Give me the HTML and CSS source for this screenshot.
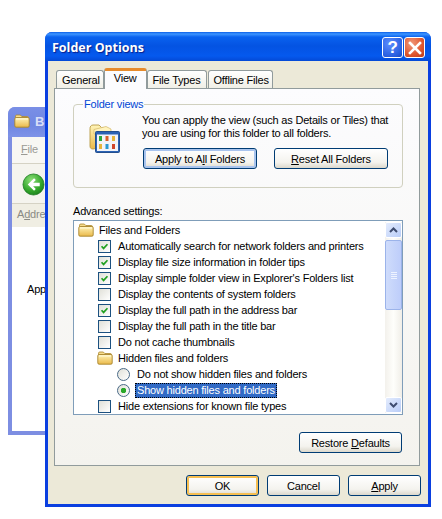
FILE: index.html
```html
<!DOCTYPE html>
<html lang="en">
<head>
<meta charset="utf-8">
<title>Folder Options</title>
<link rel="stylesheet" href="styles.css">
</head>
<body>
<svg class="defs" width="0" height="0" aria-hidden="true">
  <defs>
    <linearGradient id="fold" x1="0" y1="0" x2="0" y2="1">
      <stop offset="0" stop-color="#fff4b8"/>
      <stop offset="1" stop-color="#eab94a"/>
    </linearGradient>
    <symbol id="folder" viewBox="0 0 16 14">
      <path d="M1.5 3V2.2C1.5 1.5 2 1 2.7 1H6.3L7.8 2.5H13.3C14 2.5 14.5 3 14.5 3.7V4H1.5Z" fill="#f6dc8c" stroke="#a8842c" stroke-width=".8"/>
      <rect x=".8" y="3.5" width="14.4" height="9.7" rx="1.3" fill="url(#fold)" stroke="#a8842c" stroke-width=".9"/>
      <path d="M2 5h12" stroke="#fff9d8" stroke-width="1"/>
    </symbol>
    <symbol id="tick" viewBox="0 0 13 13">
      <path d="M3 6.2 5.4 8.8 10 3.8" fill="none" stroke="#21a121" stroke-width="2"/>
    </symbol>
  </defs>
</svg>

<main class="desktop">
  <section class="win win-back">
    <header class="back-title">
      <svg class="back-folder" viewBox="0 0 16 14"><use href="#folder"/></svg>
      <span class="back-name">Be</span>
    </header>
    <div class="back-menu"><span><u>F</u>ile</span></div>
    <div class="back-tools">
      <svg class="back-arrow" viewBox="0 0 24 24">
        <defs><radialGradient id="grn" cx=".4" cy=".3" r=".8"><stop offset="0" stop-color="#8fe07a"/><stop offset=".6" stop-color="#35a82c"/><stop offset="1" stop-color="#17781a"/></radialGradient></defs>
        <circle cx="12" cy="12" r="11" fill="url(#grn)" stroke="#1c7a20" stroke-width=".8"/>
        <path d="M18.5 10.2H11.6L14.4 7.3 12.6 5.6 6 12 12.6 18.4 14.4 16.7 11.6 13.8H18.5Z" fill="#fff"/>
      </svg>
    </div>
    <div class="back-addr">A<u>d</u>dre</div>
    <div class="back-body"><span>App</span></div>
  </section>

  <section class="win win-front">
    <header class="titlebar">
      <h1 class="title">Folder Options</h1>
      <div class="caps">
        <span class="cap cap-help">?</span>
        <span class="cap cap-close">
          <svg viewBox="0 0 14 14" width="14" height="14"><path d="M2 2 12 12M12 2 2 12" stroke="#fff" stroke-width="2.6" stroke-linecap="square"/></svg>
        </span>
      </div>
    </header>

    <div class="client">
      <nav class="tabs">
        <span class="tab tab-tight">General</span>
        <span class="tab tab-active">View</span>
        <span class="tab">File Types</span>
        <span class="tab tab-tight">Offline Files</span>
      </nav>

      <div class="panel">
        <fieldset class="group">
          <legend class="legend">Folder views</legend>
          <div class="views">
            <svg class="views-icon" viewBox="0 0 32 32">
              <path d="M2 6.500C2 4.500 3 3 5 3H11L13.500 5.500H19V24.500L5 27C3 27 2 26 2 24Z" fill="url(#fold)" stroke="#b89a44" stroke-width=".9"/>
              <path d="M6 7.500 18 4.500 23 7V12H6Z" fill="#fff3bd" stroke="#d3b868" stroke-width=".7"/>
              <rect x="7.500" y="9.500" width="24" height="21" rx="1" fill="#2b62b4" stroke="#234f8e"/>
              <rect x="9" y="12.500" width="21" height="16.500" fill="#f2f4f8"/>
              <rect x="11" y="14" width="3" height="5" fill="#2ca83a"/>
              <rect x="17.500" y="14" width="3" height="5" fill="#d8602a"/>
              <rect x="24" y="14" width="3" height="5" fill="#e6b53a"/>
              <rect x="11" y="22" width="3" height="5" fill="#e6b53a"/>
              <rect x="17.500" y="22" width="3" height="5" fill="#2a9ad0"/>
              <rect x="24" y="22" width="3" height="5" fill="#d0452a"/>
            </svg>
            <div class="views-main">
              <p class="views-text">You can apply the view (such as Details or Tiles) that<br>you are using for this folder to all folders.</p>
              <div class="views-btns">
                <button class="btn btn-focus btn-wide" type="button">Apply to A<u>l</u>l Folders</button>
                <button class="btn btn-wide" type="button"><u>R</u>eset All Folders</button>
              </div>
            </div>
          </div>
        </fieldset>

        <div class="adv-label">Advanced settings:</div>
        <div class="list">
          <ul class="rows">
            <li class="row lvl0"><svg class="ico-folder"><use href="#folder"/></svg><span>Files and Folders</span></li>
            <li class="row lvl1"><span class="check"><svg viewBox="0 0 13 13"><use href="#tick"/></svg></span><span>Automatically search for network folders and printers</span></li>
            <li class="row lvl1"><span class="check"><svg viewBox="0 0 13 13"><use href="#tick"/></svg></span><span>Display file size information in folder tips</span></li>
            <li class="row lvl1"><span class="check"><svg viewBox="0 0 13 13"><use href="#tick"/></svg></span><span>Display simple folder view in Explorer's Folders list</span></li>
            <li class="row lvl1"><span class="check"></span><span>Display the contents of system folders</span></li>
            <li class="row lvl1"><span class="check"><svg viewBox="0 0 13 13"><use href="#tick"/></svg></span><span>Display the full path in the address bar</span></li>
            <li class="row lvl1"><span class="check"></span><span>Display the full path in the title bar</span></li>
            <li class="row lvl1"><span class="check"></span><span>Do not cache thumbnails</span></li>
            <li class="row lvl1"><svg class="ico-folder"><use href="#folder"/></svg><span>Hidden files and folders</span></li>
            <li class="row lvl2"><span class="radio"></span><span>Do not show hidden files and folders</span></li>
            <li class="row lvl2"><span class="radio radio-on"></span><span class="selected">Show hidden files and folders</span></li>
            <li class="row lvl1"><span class="check"></span><span>Hide extensions for known file types</span></li>
          </ul>
          <div class="scroll">
            <span class="sb-btn"><svg viewBox="0 0 9 6" width="9" height="6"><path d="M1 5 4.500 1.500 8 5" fill="none" stroke="#3f4d70" stroke-width="2"/></svg></span>
            <span class="sb-thumb"><i></i><i></i><i></i><i></i></span>
            <span class="sb-track"></span>
            <span class="sb-btn"><svg viewBox="0 0 9 6" width="9" height="6"><path d="M1 1 4.500 4.500 8 1" fill="none" stroke="#3f4d70" stroke-width="2"/></svg></span>
          </div>
        </div>

        <div class="restore-row">
          <button class="btn btn-restore" type="button">Restore <u>D</u>efaults</button>
        </div>
      </div>

      <footer class="actions">
        <button class="btn btn-default btn-act" type="button">OK</button>
        <button class="btn btn-act" type="button">Cancel</button>
        <button class="btn btn-act" type="button"><u>A</u>pply</button>
      </footer>
    </div>
  </section>
</main>
</body>
</html>
```
FILE: styles.css
```css
* { box-sizing: border-box; }
html, body { margin: 0; padding: 0; background: #fff; }
body {
  font-family: "Liberation Sans", Arial, sans-serif;
  font-size: 11px;
  letter-spacing: -0.2px;
  color: #000;
  width: 442px;
  height: 519px;
  overflow: hidden;
}
.defs { position: absolute; }
.desktop { position: relative; width: 442px; height: 519px; }
.win { position: absolute; }

/* background explorer window */
.win-back {
  left: 8px; top: 107px; width: 80px; height: 328px;
  background: #7d8ee2;
  border-radius: 7px 7px 0 0;
  padding: 0 4px 4px;
  display: flex;
  flex-direction: column;
  overflow: hidden;
}
.back-title {
  height: 30px;
  flex: none;
  margin: 0 -4px;
  padding: 0 0 2px 6px;
  display: flex;
  align-items: center;
  gap: 5px;
  background: linear-gradient(#7a8fe6, #6f86e2 60%, #7e93e8);
}
.back-folder { width: 16px; height: 14px; }
.back-name { color: #d8def8; font-size: 13px; font-weight: 700; letter-spacing: 0; }
.back-menu {
  height: 27px; flex: none;
  padding: 6px 0 0 9px;
  background: #f8f7f3;
  border-bottom: 1px solid #d5d2c4;
  color: #9a9a94;
}
.back-tools {
  height: 40px; flex: none;
  padding: 9px 0 0 10px;
  background: #f5f4ee;
  border-bottom: 1px solid #d5d2c4;
}
.back-arrow { display: block; width: 23px; height: 23px; }
.back-addr {
  height: 23px; flex: none;
  padding: 4px 0 0 5px;
  background: #f0eee3;
  color: #8a8a84;
  white-space: nowrap;
}
.back-body { flex: 1; background: #fff; padding: 56px 0 0 15px; }

/* front dialog */
.win-front {
  left: 45px; top: 32px; width: 386px; height: 475px;
  background: #0a3fe0;
  border-radius: 7px 7px 0 0;
  padding: 0 3px 3px;
  display: flex;
  flex-direction: column;
}
.titlebar {
  height: 29px; flex: none;
  margin: 0 -3px;
  padding: 2px 6px 0 7px;
  display: flex;
  align-items: center;
  justify-content: space-between;
  border-radius: 7px 7px 0 0;
  background: linear-gradient(#0b5fe8 0, #3d95ff 2px, #0a62ef 5px, #0453e2 14px, #0559ee 24px, #0449d6 29px);
}
.title {
  margin: 0;
  font-family: "Open Sans", sans-serif;
  font-size: 12.500px;
  letter-spacing: 0;
  font-weight: 700;
  color: #fff;
  text-shadow: 1px 1px 1px #0a1f8a;
}
.caps { display: flex; gap: 1px; }
.cap {
  width: 21px; height: 21px;
  border: 1px solid #fff;
  border-radius: 3px;
  display: flex;
  align-items: center;
  justify-content: center;
  color: #fff;
}
.cap-help {
  background: radial-gradient(circle at 35% 30%, #5b8dff, #2a5fe0 70%, #1a46c0);
  font-size: 17px;
  font-weight: 700;
}
.cap-close { background: radial-gradient(circle at 35% 30%, #f09a7c, #e0562e 60%, #b83a18); }

.client {
  flex: 1;
  background: #ece9d8;
  padding: 7px 8px 0 6px;
  display: flex;
  flex-direction: column;
}
.tabs {
  display: flex;
  height: 21px;
  padding-left: 2px;
  flex: none;
  align-items: flex-end;
  position: relative;
  z-index: 1;
}
.tab {
  height: 18px;
  margin-bottom: 1px;
  padding: 2px 5px 0 5px;
  margin-right: 1px;
  line-height: 14px;
  border: 1px solid #919b9c;
  border-bottom: 0;
  border-radius: 3px 3px 0 0;
  background: linear-gradient(#fff, #f0efe6);
  white-space: nowrap;
}
.tab-tight { padding-right: 3px; }
.tab-active {
  height: 21px;
  margin: 0 0 0 -1px;
  padding: 0 9px 0 9px;
  background: #fcfcfe;
  border-color: #919b9c;
  border-top: 3px solid #e68b2c;
  border-radius: 3px 3px 0 0;
}
.panel {
  height: 378px;
  flex: none;
  border: 1px solid #919b9c;
  background: linear-gradient(#fcfcfe, #f4f3ee);
  padding: 9px 16px 0 18px;
  margin-top: -1px;
}
.group {
  margin: 0;
  height: 90px;
  padding: 0 0 0 14px;
  border: 1px solid #d0d0bf;
  border-radius: 4px;
}
.legend {
  margin-left: -5px;
  padding: 0 1px;
  color: #0046d5;
  line-height: 13px;
}
.views { display: flex; gap: 23px; padding-top: 3px; }
.views-icon { width: 32px; height: 32px; flex: none; margin-top: 8px; }
.views-main { flex: 1; }
.views-text { margin: 0 0 0 -1px; line-height: 13px; white-space: nowrap; }
.views-btns { display: flex; gap: 17px; margin-top: 8px; }

.btn {
  font: inherit;
  letter-spacing: inherit;
  color: #000;
  height: 21px;
  padding: 0;
  border: 1px solid #003c74;
  border-radius: 3px;
  background: linear-gradient(#fff, #f4f3ee 70%, #dcd8cc);
  white-space: nowrap;
}
.btn-wide { width: 114px; }
.btn-focus { box-shadow: inset 0 0 0 2px #a9c4ee; }
.btn-default { box-shadow: inset 0 0 0 2px #f6bf52; }
.adv-label { margin-top: 16px; line-height: 14px; }
.list {
  margin-top: 2px;
  height: 195px;
  width: 330px;
  border: 1px solid #7f9db9;
  background: #fff;
  display: flex;
  padding: 1px 0 1px 1px;
}
.rows { list-style: none; margin: 0; padding: 0; flex: 1; overflow: hidden; }
.row {
  height: 16px;
  display: flex;
  align-items: center;
  white-space: nowrap;
}
.lvl0 { padding-left: 3px; }
.lvl1 { padding-left: 22px; }
.lvl2 { padding-left: 42px; }
.ico-folder { width: 16px; height: 14px; margin-right: 5px; flex: none; }
.check {
  width: 13px; height: 13px;
  flex: none;
  margin: 0 7px 0 1px;
  border: 1px solid #1c5180;
  background: linear-gradient(135deg, #e0e0d8, #fff);
}
.check svg { display: block; width: 11px; height: 11px; }
.radio {
  width: 13px; height: 13px;
  flex: none;
  margin-right: 7px;
  border: 1px solid #4a6a88;
  border-radius: 50%;
  background: linear-gradient(135deg, #e0e0d8, #fff);
}
.radio-on { background: radial-gradient(circle, #2aa82a 0 2.500px, transparent 3px), linear-gradient(135deg, #e0e0d8, #fff); }
.selected {
  background: #316ac5;
  color: #fff;
  outline: 1px dotted #000;
  outline-offset: -1px;
  padding: 0 2px;
  margin-left: -2px;
  line-height: 15px;
}
.scroll { width: 17px; flex: none; display: flex; flex-direction: column; background: linear-gradient(90deg, #f3f1ec, #fefefb 50%, #f0eee8); }
.sb-btn {
  height: 16px; flex: none;
  border: 1px solid #fff;
  border-radius: 2px;
  background: linear-gradient(135deg, #e4ecfd, #b9cdf8);
  display: flex; align-items: center; justify-content: center;
}
.sb-thumb {
  height: 70px; flex: none;
  margin-top: 2px;
  border: 1px solid #9bb3ea;
  border-radius: 2px;
  background: linear-gradient(90deg, #cfdcfb, #bdcdfa);
  display: flex; flex-direction: column; align-items: center; justify-content: center; gap: 1px;
}
.sb-thumb i { display: block; width: 6px; height: 1px; background: #eef3ff; }
.sb-track { flex: 1; }
.restore-row { display: flex; justify-content: flex-end; margin-top: 17px; padding-right: 1px; }
.btn-restore { width: 103px; }
.actions { display: flex; justify-content: flex-end; gap: 8px; padding-top: 9px; margin-right: -1px; }
.btn-act { width: 73px; }
```
